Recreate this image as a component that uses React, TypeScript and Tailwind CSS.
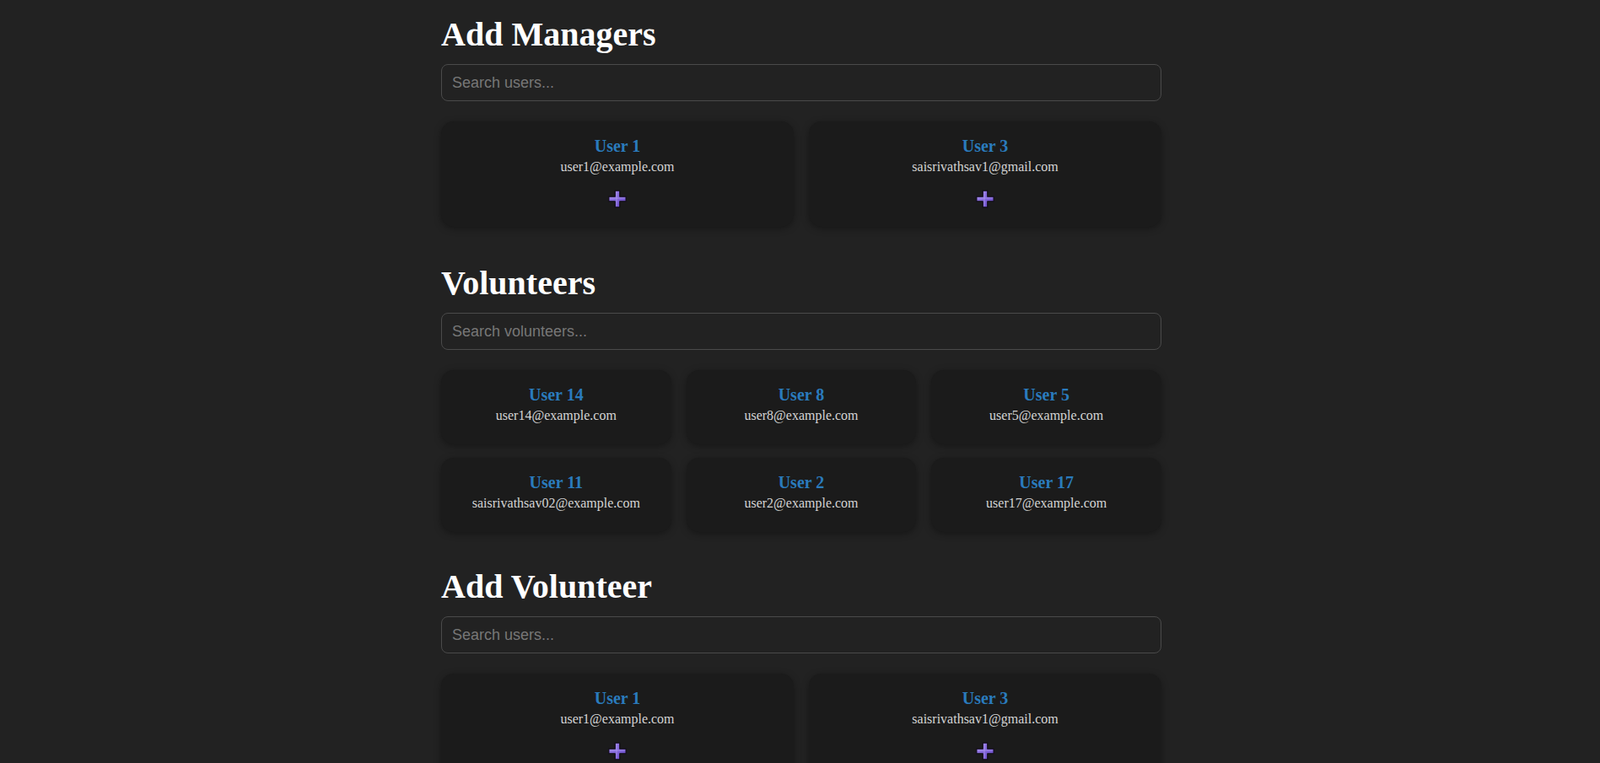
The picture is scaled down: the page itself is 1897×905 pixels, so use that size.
import React from "react";

const managers = [
  { name: "User 1", email: "user1@example.com" },
  { name: "User 3", email: "saisrivathsav1@gmail.com" },
];

const volunteers = [
  { name: "User 14", email: "user14@example.com" },
  { name: "User 8", email: "user8@example.com" },
  { name: "User 5", email: "user5@example.com" },
  { name: "User 11", email: "saisrivathsav02@example.com" },
  { name: "User 2", email: "user2@example.com" },
  { name: "User 17", email: "user17@example.com" },
];

function PlusIcon() {
  return (
    <svg width="24" height="22" viewBox="0 0 24 22">
      <defs>
        <linearGradient id="plusFill" x1="0" y1="0" x2="1" y2="1">
          <stop offset="0" stopColor="#a086ee" />
          <stop offset="1" stopColor="#6344c4" />
        </linearGradient>
      </defs>
      <path
        d="M9.2 1.2 h5.6 v7 h7.4 v5.6 h-7.4 v7 h-5.6 v-7 h-7.4 v-5.6 h7.4 z"
        fill="url(#plusFill)"
        stroke="#120e18"
        strokeWidth="1.3"
        strokeLinejoin="round"
      />
      <path d="M11 2.5 v17" stroke="#c4b4f6" strokeWidth="0.9" opacity="0.55" />
      <path d="M2.8 10 h18.4" stroke="#c4b4f6" strokeWidth="0.9" opacity="0.55" />
    </svg>
  );
}

function SectionTitle({ children }: { children: React.ReactNode }) {
  return (
    <h2 className="text-[40px] leading-[44px] font-bold text-white mb-[13px] font-['Liberation_Serif','Times_New_Roman',serif]">
      {children}
    </h2>
  );
}

function SearchBox({ placeholder }: { placeholder: string }) {
  return (
    <input
      type="text"
      placeholder={placeholder}
      className="w-full h-[44px] px-[12px] rounded-[8px] border border-[#4a4a4a] bg-[#222222] text-[18px] text-[#dddddd] placeholder:text-[#777777] outline-none font-['Liberation_Sans',Arial,sans-serif]"
    />
  );
}

function UserCard({ user, addable }: { user: { name: string; email: string }; addable?: boolean }) {
  return (
    <div
      className={
        "bg-[#1b1b1b] rounded-[15px] shadow-[0_2px_8px_rgba(0,0,0,0.35)] flex flex-col items-center pt-[18px] " +
        (addable ? "h-[125px]" : "h-[88px]")
      }
    >
      <div className="text-[20px] leading-[22px] font-bold text-[#2a7bbd]">{user.name}</div>
      <div className="text-[16px] leading-[18px] text-[#d4d4d4] mt-[5px]">{user.email}</div>
      {addable && (
        <button className="mt-[18px] flex items-center justify-center">
          <PlusIcon />
        </button>
      )}
    </div>
  );
}

export default function App() {
  return (
    <div className="min-h-screen bg-[#222222] font-['Liberation_Serif','Times_New_Roman',serif] flex justify-center pl-[3px]">
      <div className="w-[854px] pt-[19px] pb-10">
        <section>
          <SectionTitle>Add Managers</SectionTitle>
          <SearchBox placeholder="Search users..." />
          <div className="grid grid-cols-2 gap-x-[18px] gap-y-4 mt-[24px]">
            {managers.map((u) => (
              <UserCard key={u.email} user={u} addable />
            ))}
          </div>
        </section>

        <section className="mt-[45px]">
          <SectionTitle>Volunteers</SectionTitle>
          <SearchBox placeholder="Search volunteers..." />
          <div className="grid grid-cols-3 gap-x-[18px] gap-y-4 mt-[24px]">
            {volunteers.map((u) => (
              <UserCard key={u.email} user={u} />
            ))}
          </div>
        </section>

        <section className="mt-[43px]">
          <SectionTitle>Add Volunteer</SectionTitle>
          <SearchBox placeholder="Search users..." />
          <div className="grid grid-cols-2 gap-x-[18px] gap-y-4 mt-[24px]">
            {managers.map((u) => (
              <UserCard key={u.email} user={u} addable />
            ))}
          </div>
        </section>
      </div>
    </div>
  );
}
